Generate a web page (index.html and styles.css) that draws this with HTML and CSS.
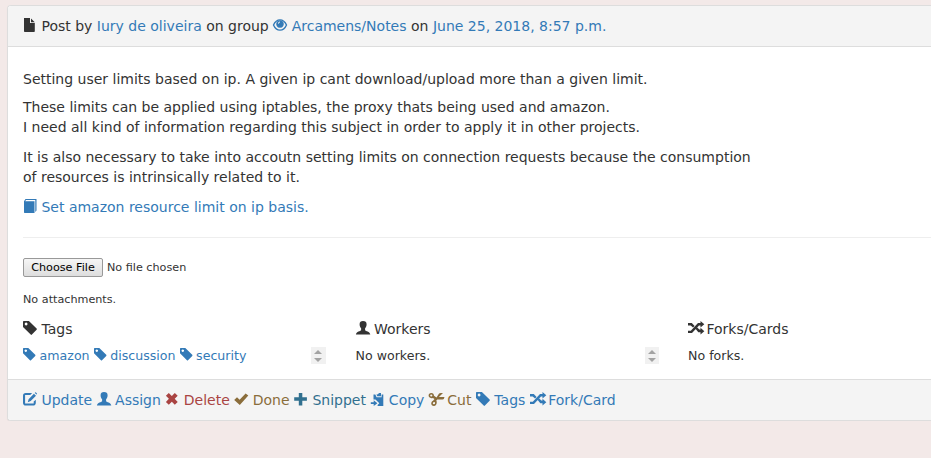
FILE: index.html
```html
<!DOCTYPE html>
<html lang="en">
<head>
<meta charset="utf-8">
<title>Post</title>
<link rel="stylesheet" href="styles.css">
</head>
<body>
<svg class="defs" aria-hidden="true">
<symbol id="file" viewBox="0 0 14 14"><path d="M1.2 0H7V5H11.800V13.2Q11.800 14 11 14H1.800Q1 14 1 13.2V0ZM8 .5L11.800 4.2H8Z"/></symbol>
<symbol id="eye" viewBox="0 0 14 14"><path fill="none" stroke="currentColor" stroke-width="1.400" d="M.5 7C2 3.600 4.200 1.900 7 1.900S12 3.600 13.500 7C12 10.400 9.800 12.100 7 12.100S2 10.400 .5 7Z"/><path fill-rule="evenodd" d="M7 2.200A3.800 3.800 0 1 1 6.990 2.200ZM7 3.600C6.200 3.500 5.100 4.200 5 5.600L5.900 5.700C6 4.900 6.400 4.600 7 4.500Z"/></symbol>
<symbol id="book" viewBox="0 0 14 14"><path d="M1 2.200L2.500 0H13.500V11.500L12.300 13V1H3L2.200 2.200H11.500V14H1.600Q1 14 1 13.200Z"/></symbol>
<symbol id="tag" viewBox="0 0 14 14"><path fill-rule="evenodd" d="M0 .7Q0 0 .7 0H5.900L13.600 7.600Q14.200 8.200 13.600 8.800L8.900 13.600Q8.300 14.200 7.700 13.600L0 5.900ZM3.100 1.600A1.400 1.400 0 1 0 3.110 1.600Z"/></symbol>
<symbol id="user" viewBox="0 0 14 14"><path d="M7 0C9.400 0 10.600 1 10.600 3.300C10.600 5.200 10 6.300 9.100 7.200V9.200C9.100 9.900 14.200 10.600 14.300 13.600H-.1C0 10.600 5.100 9.900 5.100 9.200V7.200C4.200 6.300 3.600 5.200 3.600 3.300C3.600 1 4.800 0 7 0Z"/></symbol>
<symbol id="edit" viewBox="0 0 14 14"><path d="M9.200 1H2.800Q0 1 0 3.800V10.700Q0 13.500 2.800 13.500H10Q12.800 13.500 12.800 10.700V7.700L10.700 9.600V11.400H2.100V3.100H7.200ZM10.900 1.800L13 3.700L7.700 9.100L4.800 10.300L5.600 7.200ZM12.100.6Q12.500.1 13 .5L13.900 1.400Q14.300 1.800 13.900 2.300L13.600 2.600L11.700.9Z"/></symbol>
<symbol id="remove" viewBox="0 0 14 14"><path d="M3.800.9L6.800 3.900L9.800.9L12.700 3.700L9.700 6.800L12.700 9.900L9.800 12.800L6.800 9.700L3.800 12.800L.9 9.900L3.900 6.800L.9 3.700Z"/></symbol>
<symbol id="ok" viewBox="0 0 14 14"><path d="M.2 8L3 5.200L5.600 7.700L11.600 1.400L14.300 3.500L5.800 12.900Z"/></symbol>
<symbol id="plus" viewBox="0 0 14 14"><path d="M4.800.9H8.300V5.200H12.900V8.700H8.300V13.400H4.800V8.700H.2V5.200H4.800Z"/></symbol>
<symbol id="copy" viewBox="0 0 14 14"><path d="M3.500 2.400H5.300L6.600 5.200H11.600V2.400H13.300V14H7.600V13L9.300 11.200L5.500 7.400H3.500ZM6.400 2.400L8 2.200L9 1H11V4.300H7.300ZM.8 10.200H3.700V8.300L7.400 11.200L3.700 14V12.100H.8Z"/></symbol>
<symbol id="cut" viewBox="0 0 16 14"><path fill-rule="evenodd" d="M2.200 1C4.200 1 4.900 2.400 5 3.700L7.500 5.500L9.900 1.800Q10.500 1 11.800 1H14L9.900 5H15.500L14.800 7Q14.400 7.400 13.500 7.400H8.300L7.300 8.500C8.300 10 7.800 13.600 5.100 13.900C1.600 14.100 1.400 9.900 4 8.700L5.500 6.900L3.900 5.900C1.200 6.700-.4 5.300-.4 3.600C-.4 2 .6 1 2.200 1ZM2.200 2.500C.8 2.600.9 4.500 2.300 4.500C3.800 4.400 3.700 2.500 2.200 2.500ZM5 10C3.400 10.200 3.500 12.500 5 12.300C6.500 12.200 6.500 9.900 5 10Z"/></symbol>
<symbol id="random" viewBox="0 0 16 14"><path d="M0 2H3.800L6.600 4.900L5 6.500L2.700 4.400H0ZM0 9.700H2.800L10 2.100H12.500V0L16.300 3.200L12.500 6.500V4.500H11L4 12H0ZM7.700 8L9.300 6.400L11.300 8.600H12.500V6.700L16.300 10.200L12.500 13.400V11.300H10.300Z"/></symbol>
</svg>
<article class="panel">
<header class="bar heading"><svg class="icon"><use href="#file"/></svg> Post by <a href="#">Iury de oliveira</a> on group <a href="#"><svg class="icon"><use href="#eye"/></svg> Arcamens/Notes</a> on <a href="#">June 25, 2018, 8:57 p.m.</a></header>
<div class="body">
<p class="title">Setting user limits based on ip. A given ip cant download/upload more than a given limit.</p>
<p>These limits can be applied using iptables, the proxy thats being used and amazon.<br>I need all kind of information regarding this subject in order to apply it in other projects.</p>
<p>It is also necessary to take into accoutn setting limits on connection requests because the consumption<br>of resources is intrinsically related to it.</p>
<p><a href="#"><svg class="icon"><use href="#book"/></svg> Set amazon resource limit on ip basis.</a></p>
<hr>
<div class="upload"><button type="button">Choose File</button><span>No file chosen</span></div>
<div class="attachments">No attachments.</div>
<div class="columns">
<section><h2><svg class="icon"><use href="#tag"/></svg> Tags</h2><div class="list"><div><a href="#"><svg class="icon"><use href="#tag"/></svg> amazon</a> <a href="#"><svg class="icon"><use href="#tag"/></svg> discussion</a> <a href="#"><svg class="icon"><use href="#tag"/></svg> security</a></div><span class="scroller"></span></div></section>
<section class="workers"><h2><svg class="icon"><use href="#user"/></svg> Workers</h2><div class="list"><div>No workers.</div><span class="scroller"></span></div></section>
<section><h2><svg class="icon wide"><use href="#random"/></svg> Forks/Cards</h2><div class="list"><div>No forks.</div></div></section>
</div>
</div>
<footer class="bar footer"><a href="#"><svg class="icon"><use href="#edit"/></svg> Update</a> <a href="#"><svg class="icon"><use href="#user"/></svg> Assign</a> <a href="#" class="danger"><svg class="icon"><use href="#remove"/></svg> Delete</a> <a href="#" class="warning"><svg class="icon"><use href="#ok"/></svg> Done</a> <a href="#" class="info"><svg class="icon"><use href="#plus"/></svg> Snippet</a> <a href="#"><svg class="icon"><use href="#copy"/></svg> Copy</a> <a href="#" class="warning"><svg class="icon wide"><use href="#cut"/></svg> Cut</a> <a href="#"><svg class="icon"><use href="#tag"/></svg> Tags</a> <a href="#"><svg class="icon wide"><use href="#random"/></svg> Fork/Card</a></footer>
</article>
</body>
</html>
```
FILE: styles.css
```css
* { box-sizing: border-box; }
body {
  margin: 0;
  padding: 5px 0 0 7px;
  overflow: hidden;
  background: #f3e9e8;
  color: #333;
  font: 14px/20px "DejaVu Sans", sans-serif;
}
.defs { display: none; }
a { color: #337ab7; text-decoration: none; }
.panel {
  background: #fff;
  border: 1px solid #ddd;
  border-right: 0;
  border-radius: 4px 0 0 4px;
  box-shadow: 0 1px 1px rgba(0, 0, 0, .05);
}
.bar {
  height: 41px;
  padding: 10px 15px;
  background: #f4f4f4;
  white-space: nowrap;
}
.heading { border-bottom: 1px solid #ddd; border-radius: 3px 0 0 0; }
.footer { border-top: 1px solid #ddd; border-radius: 0 0 0 3px; }
.icon {
  display: inline-block;
  width: 1em;
  height: 1em;
  overflow: visible;
  fill: currentColor;
  vertical-align: -1px;
}
symbol { overflow: visible; }
.wide { width: 16px; margin-right: -2px; }
.body { height: 332px; padding: 22px 0 0 15px; }
p { margin: 0 0 10px; }
.title { margin-bottom: 8px; }
hr { margin: 20px 0 19px; border: 0; border-top: 1px solid #eee; }
.upload { display: flex; gap: 4px; align-items: center; height: 21px; font-size: 11.2px; }
button {
  width: 80px;
  height: 19px;
  padding: 0;
  border: 1px solid #999;
  border-radius: 2px;
  background: linear-gradient(#f6f6f6, #ddd);
  color: #000;
  font: 11.2px/15px "DejaVu Sans", sans-serif;
}
.attachments { margin-top: 12px; font-size: 11.2px; }
.columns { display: grid; grid-template-columns: 332.5px 332.5px 1fr; margin-top: 9px; }
h2 { margin: 0; font-size: 14px; font-weight: 400; line-height: 20px; }
section { padding-right: 29.6px; }
.workers { padding-right: 29px; }
.list { display: flex; justify-content: space-between; height: 17px; margin-top: 8px; font-size: 12.6px; line-height: 17px; white-space: nowrap; }
.scroller {
  display: flex;
  flex-direction: column;
  align-items: center;
  justify-content: space-between;
  width: 15px;
  height: 17px;
  padding: 3px 0 2px;
  background: #f1f1f1;
}
.workers .scroller { width: 14px; }
.scroller::before, .scroller::after { content: ""; border: 4px solid transparent; }
.scroller::before { border-top: 0; border-bottom-color: #a3a3a3; }
.scroller::after { border-bottom: 0; border-top-color: #a3a3a3; }
a.danger { color: #a94442; }
a.warning { color: #8a6d3b; }
a.info { color: #31708f; }
```
